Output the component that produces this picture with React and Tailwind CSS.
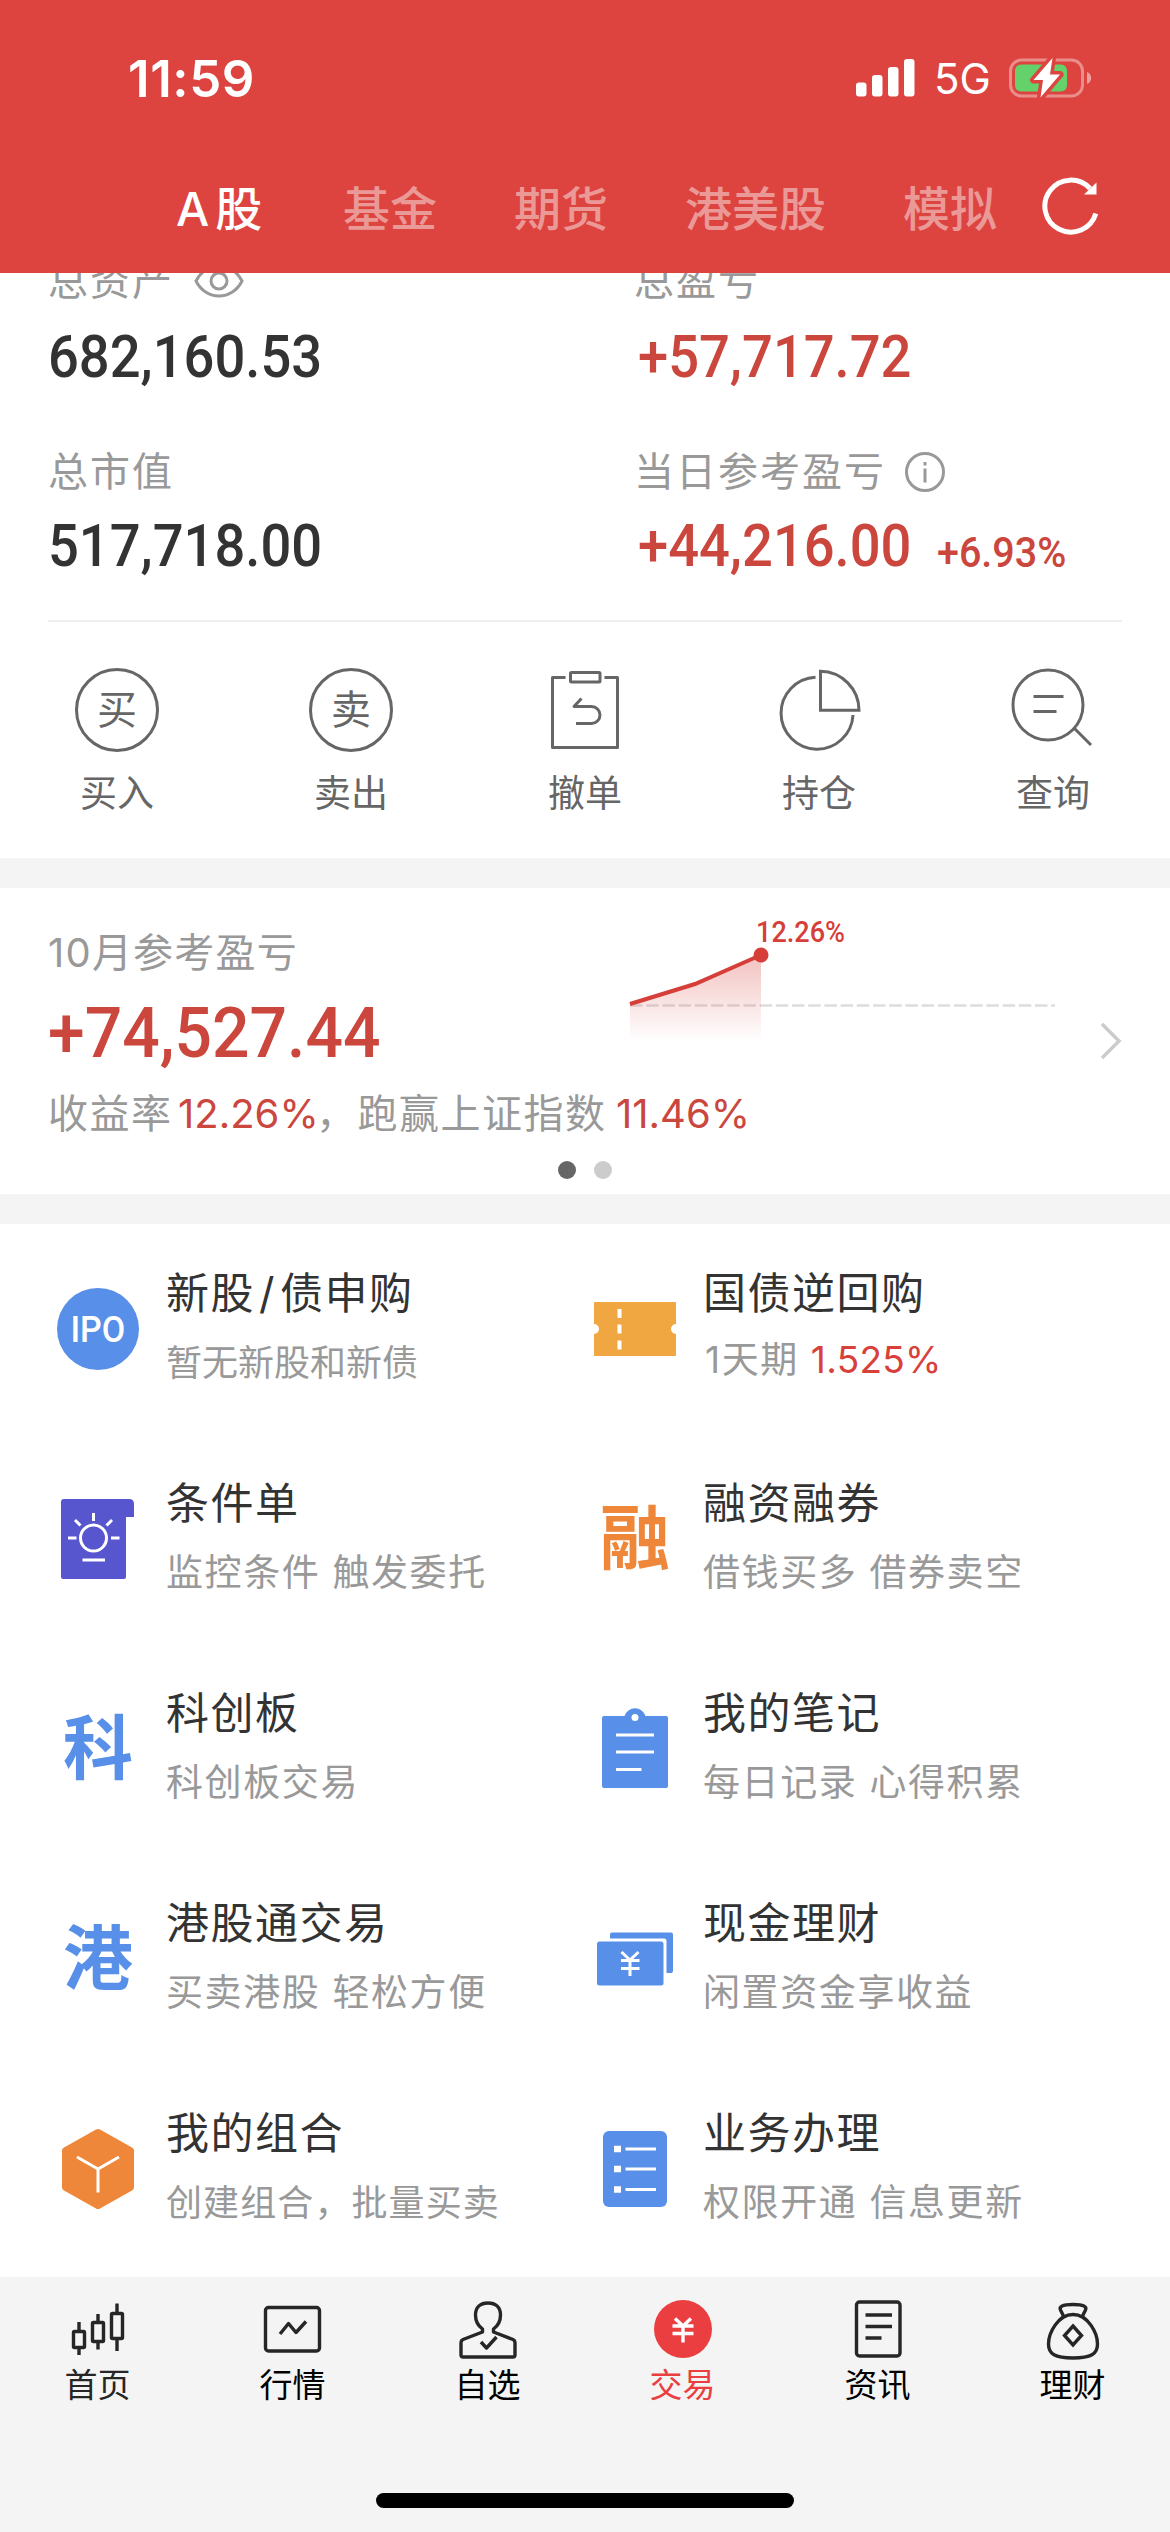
import React from "react";

const tabs = ["基金", "期货", "港美股", "模拟"];

// Line icons share the same gray stroke
const CharCircle = ({ char }) => (
  <div className="w-[84px] h-[84px] rounded-full border-3 border-[#666] flex items-center justify-center text-[40px] leading-none text-[#666]">
    {char}
  </div>
);

const CancelIcon = () => (
  <svg width="84" height="84" viewBox="0 0 84 84" fill="none" stroke="#666" strokeWidth="3" strokeLinejoin="round">
    <path d="M22.500 9.500H9.500V79.500H74.500V9.500H61.500" />
    <rect x="27.500" y="4.500" width="29.500" height="9.500" rx="1" />
    <path d="M38.500 30.500L31 38.500H48.500a8.500 8.500 0 0 1 0 17H33" />
  </svg>
);

const PositionIcon = () => (
  <svg width="84" height="84" viewBox="0 0 84 84" fill="none" stroke="#666" strokeWidth="3">
    <path d="M38.500 9.200A36 36 0 1 0 76 47" />
    <path d="M43.500 3.300V42.300H82A39 39 0 0 0 43.500 3.300Z" />
  </svg>
);

const QueryIcon = () => (
  <svg width="84" height="84" viewBox="0 0 84 84" fill="none" stroke="#666" strokeWidth="3">
    <circle cx="37" cy="37" r="35" />
    <path d="M63 60L80 77M22.500 28.500H52.500M22.500 43.500H45.500" />
  </svg>
);

const actions = [
  { label: "买入", icon: <CharCircle char="买" /> },
  { label: "卖出", icon: <CharCircle char="卖" /> },
  { label: "撤单", icon: <CancelIcon /> },
  { label: "持仓", icon: <PositionIcon /> },
  { label: "查询", icon: <QueryIcon /> },
];

const IpoIcon = () => (
  <div className="w-[82px] h-[82px] rounded-full bg-[#588fe8] flex items-center justify-center text-white text-[37px] leading-none font-medium font-['Roboto',sans-serif]">
    <span className="scale-x-[0.92]">IPO</span>
  </div>
);

const TicketIcon = () => (
  <svg width="82" height="54" viewBox="0 0 82 54">
    <path d="M1 0H81Q82 0 82 1V22a5 5 0 0 0 0 10V53Q82 54 81 54H1Q0 54 0 53V32a5 5 0 0 0 0-10V1Q0 0 1 0Z" fill="#f1a741" />
    <path d="M25.500 7V16M25.500 22.500V31.500M25.500 38.500V47.500" stroke="#fff" strokeWidth="4" />
  </svg>
);

const ConditionIcon = () => (
  <svg width="76" height="82" viewBox="0 0 76 82">
    <path d="M4 1H69Q74 1 74 6V19H66V79Q66 81 64 81H3Q1 81 1 79V4Q1 1 4 1Z" fill="#5856cf" />
    <g fill="none" stroke="#fff" strokeWidth="3">
      <circle cx="33.500" cy="40" r="13" />
      <path d="M33.500 15V23M8 40H16.500M51 40H59.500M15 22L20.500 27.500M52 22L46.500 27.500M22.500 62H45" />
    </g>
  </svg>
);

const CharIcon = ({ char, color }) => (
  <span className={`text-[70px] leading-none font-bold ${color}`}>{char}</span>
);

const NoteIcon = () => (
  <svg className="-mt-[4px]" width="66" height="82" viewBox="0 0 66 82">
    <path d="M2 10H22.500a11 11 0 0 1 21 0H64Q66 10 66 12V80Q66 82 64 82H2Q0 82 0 80V12Q0 10 2 10Z" fill="#588fe8" />
    <circle cx="33" cy="11.500" r="3.500" fill="#fff" />
    <path d="M14 29H52M14 46H52M14 63.500H39.500" stroke="#fff" strokeWidth="3" />
  </svg>
);

const CashIcon = () => (
  <svg width="76" height="54" viewBox="0 0 76 54">
    <path d="M13 6.500V2.500Q13 .500 15 .500H74Q76 .500 76 2.500V39Q76 41 74 41H69.500V9Q69.500 6.500 67 6.500Z" fill="#588fe8" />
    <rect x="0" y="9.500" width="66.500" height="44" rx="2.500" fill="#588fe8" />
    <path d="M24.500 20L33 28L41.500 20M33 28V44M24 28.500H42.500M24 36.500H42.500" fill="none" stroke="#fff" strokeWidth="3" />
  </svg>
);

const CubeIcon = () => (
  <svg width="72" height="82" viewBox="0 0 72 82">
    <path d="M34 1.500Q36 .500 38 1.500L70 19.500Q72 20.500 72 22.500V59.500Q72 61.500 70 62.500L38 80.500Q36 81.500 34 80.500L2 62.500Q0 61.500 0 59.500V22.500Q0 20.500 2 19.500Z" fill="#ef873b" />
    <path d="M15 29L36 41L57 29M36 41V64.500" fill="none" stroke="#fff" strokeWidth="3" />
  </svg>
);

const ListIcon = () => (
  <svg width="64" height="76" viewBox="0 0 64 76">
    <rect width="64" height="76" rx="6" fill="#588fe8" />
    <path d="M11 18H18M11 38H18M11 58.500H18" stroke="#fff" strokeWidth="6.500" />
    <path d="M22.500 18H53M22.500 38H53M22.500 58.500H53" stroke="#fff" strokeWidth="3" />
  </svg>
);

const services = [
  { title: "新股/债申购", desc: "暂无新股和新债", icon: <IpoIcon />, descClass: "text-[36px]" },
  { title: "国债逆回购", desc: "1天期", rate: "1.525%", icon: <TicketIcon />, descClass: "ml-[2px] text-[37px] tracking-[1.600px]" },
  { title: "条件单", desc: "监控条件 触发委托", icon: <ConditionIcon /> },
  { title: "融资融券", desc: "借钱买多 借券卖空", icon: <CharIcon char="融" color="text-[#ef873b]" /> },
  { title: "科创板", desc: "科创板交易", icon: <CharIcon char="科" color="text-[#588fe8]" /> },
  { title: "我的笔记", desc: "每日记录 心得积累", icon: <NoteIcon /> },
  { title: "港股通交易", desc: "买卖港股 轻松方便", icon: <CharIcon char="港" color="text-[#588fe8]" /> },
  { title: "现金理财", desc: "闲置资金享收益", icon: <CashIcon /> },
  { title: "我的组合", desc: "创建组合，批量买卖", icon: <CubeIcon />, descClass: "text-[36px] tracking-[1.100px]" },
  { title: "业务办理", desc: "权限开通 信息更新", icon: <ListIcon /> },
];

const navSvg = {
  width: 62,
  height: 62,
  viewBox: "0 0 62 62",
  fill: "none",
  stroke: "#262626",
  strokeWidth: 3.4,
  strokeLinejoin: "round",
};

const navItems = [
  {
    label: "首页",
    color: "text-[#262626]",
    icon: (
      <svg {...navSvg}>
        <rect x="6.500" y="33.500" width="11" height="16" rx="1" />
        <rect x="25.500" y="24.500" width="11" height="19" rx="1" />
        <rect x="44.500" y="15.500" width="11" height="25" rx="1" />
        <path d="M12 24V33M12 50V57M31 16V24M31 44V51.500M50 5.500V15M50 41V53" />
      </svg>
    ),
  },
  {
    label: "行情",
    color: "text-black",
    icon: (
      <svg {...navSvg}>
        <rect x="3.500" y="9.500" width="54" height="43.500" rx="3" />
        <path d="M18 36L26.500 25.500L34 34.500L44 23.500" />
      </svg>
    ),
  },
  {
    label: "自选",
    color: "text-black",
    icon: (
      <svg {...navSvg}>
        <path d="M25.500 31C20 27 18.500 23 18.500 17C18.500 9 23.500 5 31 5S43.500 9 43.500 17C43.500 23 42 27 36.500 31V34L56 41.500Q58 42.500 58 44.500V57Q58 59 56 59H6Q4 59 4 57V44.500Q4 42.500 6 41.500L25.500 34Z" />
        <path d="M24 44L29.500 50L39.500 39" />
      </svg>
    ),
  },
  {
    label: "交易",
    color: "text-[#ea3e41]",
    icon: (
      <svg {...navSvg}>
        <circle cx="31" cy="31" r="29" fill="#ea3e41" stroke="none" />
        <path d="M23 20.500L31 28L39 20.500M31 28V44.500M20.500 28H41.500M20.500 35.500H41.500" stroke="#fff" />
      </svg>
    ),
  },
  {
    label: "资讯",
    color: "text-black",
    icon: (
      <svg {...navSvg}>
        <rect x="9.500" y="4" width="43.500" height="54" rx="3" />
        <path d="M18.500 17H45M18.500 28.500H45M18.500 40H34.500" />
      </svg>
    ),
  },
  {
    label: "理财",
    color: "text-black",
    icon: (
      <svg {...navSvg}>
        <path d="M22 19L18.500 12C17 8.500 20 6.500 31 6.500S45 8.500 43.500 12L40 19" />
        <path d="M31 16.500C16 16.500 6.500 35 6.500 46C6.500 56 13 60 31 60S55.500 56 55.500 46C55.500 35 46 16.500 31 16.500Z" />
        <path d="M31 28L39.500 37.500L31 47L22.500 37.500Z" strokeLinejoin="miter" />
      </svg>
    ),
  },
];

// Narrow numerals used for all the amounts
const Amount = ({ children, className, scale = "scale-x-[0.905]" }) => (
  <div className={`h-[60px] leading-[60px] whitespace-nowrap font-medium font-['Roboto',sans-serif] ${className}`}>
    <span className={`inline-block origin-left ${scale}`}>{children}</span>
  </div>
);

const StatusBar = () => (
  <div className="h-[156px] flex items-center justify-between pl-[128px] pr-[78px] text-white">
    <span className="pt-[1px] text-[51px] leading-none font-semibold tracking-[0.600px]">11:59</span>
    <div className="flex items-center">
      <svg width="60" height="38" viewBox="0 0 60 38" fill="#fff">
        <rect x="0" y="23.500" width="10.500" height="14" rx="3" />
        <rect x="16" y="16" width="10.500" height="21.500" rx="3" />
        <rect x="32" y="8" width="10.500" height="29.500" rx="3" />
        <rect x="48" y="0" width="10.500" height="37.500" rx="3" />
      </svg>
      <span className="ml-[18px] w-[74px] pt-[2px] text-[42px] leading-none">5G</span>
      <svg width="84" height="44" viewBox="0 0 84 44">
        <rect x="2.500" y="4" width="72" height="36" rx="11" fill="none" stroke="#fff" strokeOpacity=".4" strokeWidth="3" />
        <path d="M79 16C84.500 18 84.500 26 79 28Z" fill="#fff" fillOpacity=".5" />
        <rect x="7" y="8.500" width="52" height="27" rx="6" fill="#65d16a" />
        <path
          d="M44.500 2L25.500 24H35L32.500 41.500L52 18.500H42Z"
          fill="#fff"
          stroke="#dd4440"
          strokeWidth="7"
          strokeLinejoin="round"
          paintOrder="stroke"
        />
      </svg>
    </div>
  </div>
);

const TabBar = () => (
  <div className="h-[104px] flex items-center pl-[176px] text-[47px] leading-none">
    <span className="w-[167px] whitespace-nowrap font-medium text-white">
      <span className="mr-[6px]">A</span>股
    </span>
    <div className="flex gap-[77px] text-[#ea9997] font-medium">
      {tabs.map((tab) => (
        <span key={tab} className="whitespace-nowrap">{tab}</span>
      ))}
    </div>
    <svg className="ml-[44px] -mt-[4px]" width="60" height="60" viewBox="0 0 60 60" fill="none" stroke="#fff" strokeWidth="5">
      <path d="M54.800 37.500A26 26 0 1 1 49 12.500" />
      <path d="M55.500 6.500V18.500H43Z" fill="#fff" stroke="none" />
    </svg>
  </div>
);

const Account = () => (
  <section className="h-[585px] overflow-hidden bg-white">
    <div className="-mt-[20px] ml-12 flex text-[40px] leading-[56px] tracking-[2px] text-[#999]">
      <div className="w-[586px] flex items-center">
        总资产
        <svg className="ml-[20px]" width="50" height="36" viewBox="0 0 50 36" fill="none" stroke="#999" strokeWidth="3">
          <path d="M2 18C12-2 38-2 48 18C38 38 12 38 2 18Z" />
          <circle cx="25" cy="18" r="8" />
        </svg>
      </div>
      <div>总盈亏</div>
    </div>
    <div className="mt-[18px] ml-12 flex">
      <Amount className="w-[590px] text-[60px] text-[#333]">682,160.53</Amount>
      <Amount className="text-[60px] text-[#cb463d]">+57,717.72</Amount>
    </div>
    <div className="mt-[57px] ml-12 flex text-[40px] leading-[56px] tracking-[2px] text-[#999]">
      <div className="w-[586px]">总市值</div>
      <div className="flex items-center">
        当日参考盈亏
        <svg className="ml-[19px]" width="40" height="40" viewBox="0 0 40 40" fill="none" stroke="#999" strokeWidth="3">
          <circle cx="20" cy="20" r="18.500" />
          <path d="M20 10V13.500M20 16.500V30.500" />
        </svg>
      </div>
    </div>
    <div className="mt-[16px] ml-12 flex">
      <Amount className="w-[590px] text-[60px] text-[#333]">517,718.00</Amount>
      <Amount className="w-[299px] text-[60px] text-[#cb463d]">+44,216.00</Amount>
      <Amount className="pt-[7px] text-[42px] text-[#cb463d]" scale="scale-x-[0.94]">+6.93%</Amount>
    </div>
    <div className="mt-[44px] mx-12 h-[2px] bg-[#eee]" />
    <div className="mt-[46px] grid grid-cols-5">
      {actions.map((a) => (
        <div key={a.label} className="flex flex-col items-center">
          {a.icon}
          <span className="mt-[18px] text-[37px] leading-[48px] text-[#666]">{a.label}</span>
        </div>
      ))}
    </div>
  </section>
);

const ProfitCard = () => (
  <section className="h-[306px] bg-white pt-[37px]">
    <div className="flex pl-12">
      <div className="w-[580px] h-[224px] shrink-0">
        <div className="text-[40px] leading-[56px] tracking-[1.200px] text-[#999]">10月参考盈亏</div>
        <Amount className="mt-[22px] text-[71px] text-[#cb463d]" scale="scale-x-[0.93]">+74,527.44</Amount>
        <div className="mt-[23px] text-[40px] leading-[56px] text-[#999] whitespace-nowrap flex">
          <span className="w-[130px] shrink-0 tracking-[1.500px]">收益率</span>
          <span className="w-[138px] shrink-0 text-[#cb463d]">12.26%</span>
          <span className="w-[300px] shrink-0 tracking-[1.500px]">，跑赢上证指数</span>
          <span className="text-[#cb463d]">11.46%</span>
        </div>
      </div>
      <svg className="-mt-[13px] shrink-0" width="432" height="140" viewBox="0 0 432 140">
        <defs>
          <linearGradient id="area" x1="0" y1="0" x2="0" y2="1">
            <stop offset="0" stopColor="#d63f39" stopOpacity=".32" />
            <stop offset="1" stopColor="#d63f39" stopOpacity="0" />
          </linearGradient>
        </defs>
        <path d="M2 93.500H427" stroke="#ddd" strokeWidth="2.500" strokeDasharray="12.500 3.700" />
        <path d="M2 92L67 72L133 43V129H2Z" fill="url(#area)" />
        <path d="M2 92L67 72L133 43" fill="none" stroke="#d63f39" strokeWidth="4" />
        <circle cx="133" cy="43" r="7.500" fill="#d63f39" />
        <text x="128" y="30" textLength="89" lengthAdjust="spacingAndGlyphs" className="font-['Roboto',sans-serif] font-medium text-[30px]" fill="#d63f39">12.26%</text>
      </svg>
      <svg className="ml-[39px] mt-[97px]" width="24" height="38" viewBox="0 0 24 38" fill="none" stroke="#ccc" strokeWidth="3.500">
        <path d="M3 2L20 19L3 36" />
      </svg>
    </div>
    <div className="mt-[12px] flex justify-center gap-[18px]">
      <span className="w-[18px] h-[18px] rounded-full bg-[#666]" />
      <span className="w-[18px] h-[18px] rounded-full bg-[#ccc]" />
    </div>
  </section>
);

const ServiceItem = ({ item }) => (
  <div className="h-[210px] flex items-center">
    <div className="w-[100px] flex justify-center shrink-0">{item.icon}</div>
    <div className="ml-[18px] -mt-[6px] whitespace-nowrap">
      <div className="text-[43px] leading-[60px] tracking-[1.500px] text-[#333]">
        {item.title.split("/").map((part, i) => (
          <React.Fragment key={part}>
            {i > 0 && <span className="mx-1">/</span>}
            {part}
          </React.Fragment>
        ))}
      </div>
      <div
        className={`leading-[52px] text-[#999] ${item.rate ? "mt-[11px] mb-[3px]" : "mt-[14px]"} ${
          item.descClass || "text-[37px] tracking-[1.600px]"
        }`}
      >
        {item.desc}
        {item.rate && <span className="ml-[12px] tracking-[0.300px] text-[#d8403a]">{item.rate}</span>}
      </div>
    </div>
  </div>
);

const BottomNav = () => (
  <nav className="h-[255px] bg-[#f4f4f4] flex flex-col items-center">
    <div className="w-full grid grid-cols-6 pt-[21px]">
      {navItems.map((n) => (
        <div key={n.label} className="flex flex-col items-center">
          {n.icon}
          <span className={`mt-[3px] text-[33px] leading-[44px] ${n.color}`}>{n.label}</span>
        </div>
      ))}
    </div>
    <div className="mt-[86px] w-[418px] h-[15px] rounded-full bg-black" />
  </nav>
);

const App = () => {
  return (
    <div className="w-[1170px] h-[2532px] overflow-hidden bg-[#f4f4f4] font-['Inter','Noto_Sans_CJK_SC',sans-serif]">
      <header className="h-[273px] bg-[#dd4440]">
        <StatusBar />
        <TabBar />
      </header>
      <Account />
      <div className="h-[30px]" />
      <ProfitCard />
      <div className="h-[30px]" />
      <section className="h-[1053px] bg-white pl-12 grid grid-cols-[537px_1fr] content-start">
        {services.map((item) => (
          <ServiceItem key={item.title} item={item} />
        ))}
      </section>
      <BottomNav />
    </div>
  );
};

export default App;
